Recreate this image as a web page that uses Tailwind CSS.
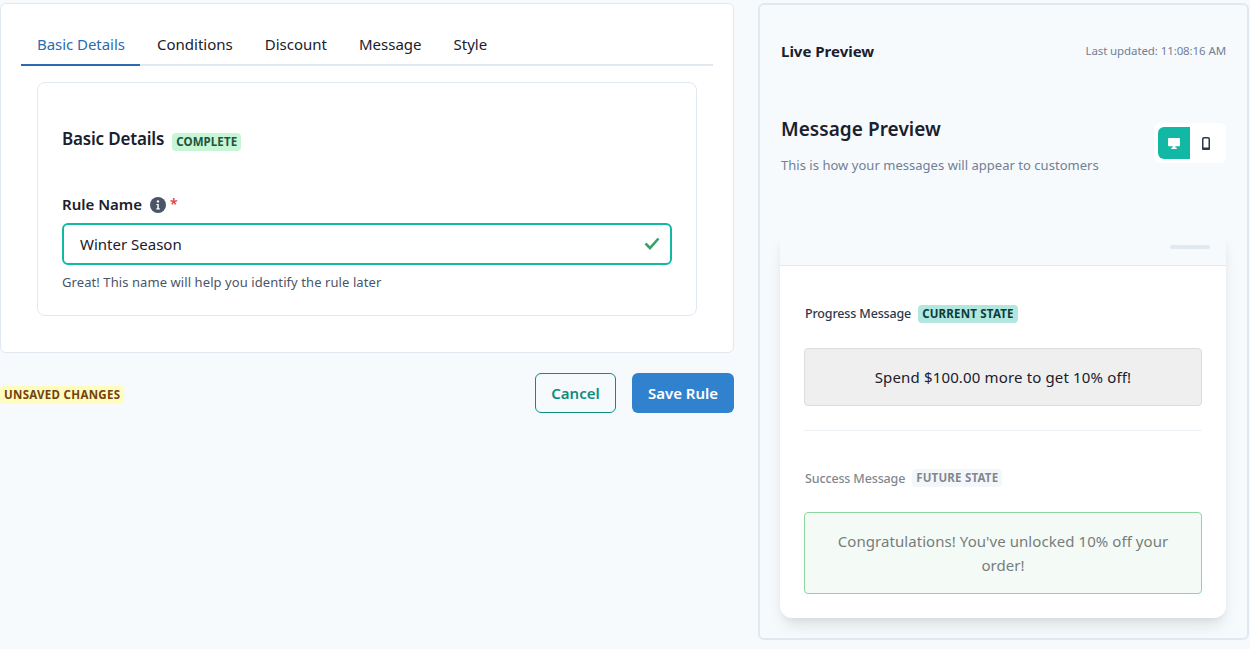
<!doctype html>
<html>
<head>
<meta charset="utf-8">
<script src="https://cdn.jsdelivr.net/npm/@tailwindcss/browser@4"></script>
</head>
<body class="m-0 h-[649px] w-[1250px] overflow-hidden bg-[#f7fafc] font-['Noto_Sans',sans-serif] text-[#1a202c]">
<div class="flex items-start gap-[24px] pt-[3px]">
  <div class="w-[734px]">
    <section class="h-[350px] rounded-md border border-[#e2e8f0] bg-white px-[20px] pt-[20px]">
      <nav class="flex h-[42px] border-b-2 border-[#e2e8f0] text-[15px] whitespace-nowrap">
        <span class="-mb-[2px] flex h-[42px] w-[119px] items-center border-b-2 border-[#2b6cb0] px-[16px] tracking-[-0.05px] text-[#2b6cb0]">Basic Details</span>
        <span class="flex h-[40px] items-center px-[17px]">Conditions</span>
        <span class="flex h-[40px] items-center px-[15px]">Discount</span>
        <span class="flex h-[40px] items-center px-[17px]">Message</span>
        <span class="flex h-[40px] items-center px-[15px]">Style</span>
      </nav>
      <div class="mx-[16px] mt-[16px] h-[234px] rounded-lg border border-[#e2e8f0] px-[24px] pt-[44px]">
        <div class="flex h-[24px] items-center gap-[8px]">
          <h2 class="text-[17px] font-semibold tracking-[-0.18px]">Basic Details</h2>
          <span class="mt-[5px] rounded-sm bg-[#c6f6d5] px-[4px] text-[11.5px] leading-[18px] font-bold tracking-[0.1px] text-[#22543d]">COMPLETE</span>
        </div>
        <div class="mt-[41px] flex h-[24px] items-center text-[15px] font-semibold">
          <span>Rule Name</span>
          <svg class="ml-[8px] mt-[2px] h-[16px] w-[16px]" viewBox="0 0 16 16"><circle cx="8" cy="8" r="8" fill="#4a5568"/><circle cx="8" cy="4.4" r="1.2" fill="#fff"/><path d="M6.3 6.9h2.5v4.4h1v1.2H6.3v-1.2h1V8.1h-1z" fill="#fff"/></svg>
          <span class="ml-[4px] -mt-[2px] text-[14px] text-[#e53e3e]">*</span>
        </div>
        <div class="relative mt-[7px] flex h-[42px] items-center rounded-md border-2 border-[#13b8a5] pt-[1px] pl-[16px] text-[15px]">
          Winter Season
          <svg class="absolute right-[10px] top-[11px] h-[14px] w-[16px]" viewBox="0 0 16 14"><path d="M1.500 7.500l4.500 4.500 8.500-9.500" fill="none" stroke="#38a169" stroke-width="2.6"/></svg>
        </div>
        <p class="mt-[7px] text-[13px] leading-[20px] tracking-[0.08px] text-[#4a5568]">Great! This name will help you identify the rule later</p>
      </div>
    </section>
    <div class="mt-[20px] flex items-center justify-between">
      <span class="mt-[3px] rounded-sm bg-[#fefcbf] px-[4px] text-[11.5px] leading-[18px] font-bold tracking-[0.3px] text-[#744210]">UNSAVED CHANGES</span>
      <div class="flex gap-[16px] text-[15px] font-semibold">
        <button class="h-[40px] w-[81px] rounded-md border border-[#0f8c7e] text-[#0f8c7e]">Cancel</button>
        <button class="h-[40px] w-[102px] rounded-md bg-[#3182ce] text-white">Save Rule</button>
      </div>
    </div>
  </div>
  <aside class="h-[637px] w-[491px] rounded-md border-2 border-[#e2e8f0] bg-[#f7fafc] px-[21px] pt-[22px]">
    <div class="flex h-[48px] items-center justify-between">
      <h3 class="text-[15px] font-bold">Live Preview</h3>
      <span class="text-[11.5px] tracking-[-0.1px] text-[#718096]">Last updated: 11:08:16 AM</span>
    </div>
    <div class="mt-[39px] flex items-start justify-between">
      <div>
        <h2 class="text-[19px] leading-[30px] font-semibold tracking-[0.05px]">Message Preview</h2>
        <p class="mt-[11px] text-[13px] leading-[20px] tracking-[0.03px] text-[#718096]">This is how your messages will appear to customers</p>
      </div>
      <div class="mt-[9px] flex rounded-md bg-white p-[4px]">
        <span class="flex h-[32px] w-[32px] items-center justify-center rounded-l-md bg-[#13b8a5]">
          <svg class="h-[11px] w-[12px]" viewBox="0 0 13 12" fill="#fff"><path d="M1 0h11a1 1 0 0 1 1 1v7a1 1 0 0 1-1 1H8v1.500h1.500V12h-6v-1.500H5V9H1a1 1 0 0 1-1-1V1a1 1 0 0 1 1-1z"/></svg>
        </span>
        <span class="flex h-[32px] w-[32px] items-center justify-center">
          <svg class="h-[13px] w-[8px]" viewBox="0 0 8 13"><rect x="0.75" y="0.75" width="6.500" height="11.500" rx="1.200" fill="none" stroke="#2d3748" stroke-width="1.500"/><rect x="0" y="10.500" width="8" height="2.500" rx="1" fill="#2d3748"/></svg>
        </span>
      </div>
    </div>
    <div class="-ml-[1px] mt-[55px] h-[388px] overflow-hidden rounded-xl bg-white shadow-[0_10px_15px_-3px_rgba(0,0,0,0.1),0_4px_6px_-2px_rgba(0,0,0,0.05)]">
      <div class="flex h-[36px] items-start justify-end border-b border-[#e2e8f0] bg-[#f7fafc] pt-[15px] pr-[16px]">
        <span class="h-[4px] w-[40px] rounded-full bg-[#e2e8f0]"></span>
      </div>
      <div class="px-[24px]">
        <div class="mt-[39px] flex h-[18px] items-center gap-[7px] pl-[1px]">
          <span class="text-[12.500px] leading-[18px] font-medium tracking-[-0.15px] text-[#2d3748]">Progress Message</span>
          <span class="rounded-sm bg-[#b2e7e0] px-[4px] text-[11.500px] leading-[18px] font-bold tracking-[0.2px] text-[#0b3d38]">CURRENT STATE</span>
        </div>
        <div class="mt-[25px] flex h-[58px] items-center justify-center rounded-sm border border-[#dcdcdc] bg-[#efefef] text-[15px] tracking-[0.15px]">Spend $100.00 more to get 10% off!</div>
        <div class="mt-[24px] border-t border-[#edf2f7]"></div>
        <div class="opacity-60">
          <div class="mt-[38px] flex h-[18px] items-center gap-[7px] pl-[1px]">
            <span class="mt-[1px] text-[12.500px] leading-[18px] font-medium tracking-[-0.15px] text-[#2d3748]">Success Message</span>
            <span class="rounded-sm bg-[#edf2f7] px-[4px] text-[11.500px] leading-[18px] font-bold tracking-[0.2px] text-[#2d3748]">FUTURE STATE</span>
          </div>
        </div>
        <div class="mt-[25px] flex h-[82px] items-center justify-center rounded-sm border border-[#90d6a0] bg-[#f4fbf6] px-[24px] text-center text-[15px] leading-[24px] tracking-[0.06px] text-[#777d7b]">Congratulations! You've unlocked 10% off your order!</div>
      </div>
    </div>
  </aside>
</div>
</body>
</html>
